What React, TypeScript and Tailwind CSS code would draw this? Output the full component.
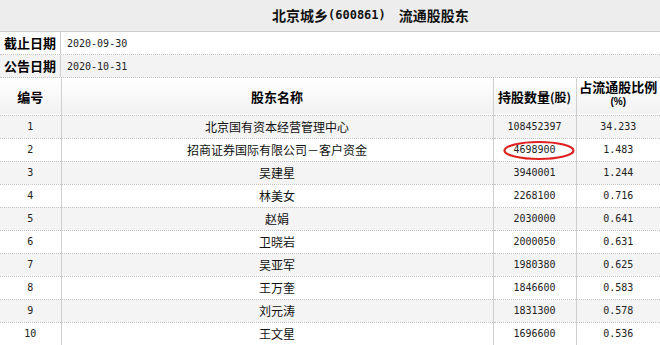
import React from 'react';

type Holder = { no: number; name: string; shares: string; ratio: string };

const holders: Holder[] = [
  { no: 1, name: '北京国有资本经营管理中心', shares: '108452397', ratio: '34.233' },
  { no: 2, name: '招商证券国际有限公司－客户资金', shares: '4698900', ratio: '1.483' },
  { no: 3, name: '吴建星', shares: '3940001', ratio: '1.244' },
  { no: 4, name: '林美女', shares: '2268100', ratio: '0.716' },
  { no: 5, name: '赵娟', shares: '2030000', ratio: '0.641' },
  { no: 6, name: '卫晓岩', shares: '2000050', ratio: '0.631' },
  { no: 7, name: '吴亚军', shares: '1980380', ratio: '0.625' },
  { no: 8, name: '王万奎', shares: '1846600', ratio: '0.583' },
  { no: 9, name: '刘元涛', shares: '1831300', ratio: '0.578' },
  { no: 10, name: '王文星', shares: '1696600', ratio: '0.536' },
];

const cjk = "font-['Noto_Sans_CJK_SC','Noto_Sans',sans-serif]";
const mono = "font-['DejaVu_Sans_Mono','Liberation_Mono',monospace]";

function DateRow({ label, value, shaded }: { label: string; value: string; shaded?: boolean }) {
  return (
    <div className={`flex h-[23px] border-b border-dotted border-[#c4c4c4] ${shaded ? 'bg-[#f3f3f3]' : 'bg-white'}`}>
      <div className={`w-[61px] shrink-0 border-r border-[#cfcfcf] flex items-center justify-center text-[13px] font-bold text-black ${cjk}`}>
        {label}
      </div>
      <div className={`flex items-center pl-[6px] text-[10px] text-[#222] ${mono}`}>{value}</div>
    </div>
  );
}

export default function App() {
  return (
    <div className={`w-[660px] h-[345px] overflow-hidden bg-white text-black ${cjk}`}>
      <div className="h-[32px] bg-[#ededed] border-b border-[#cdcdcd] flex items-center pl-[272px] pb-[1px]">
        <span className="text-[14px] font-bold text-[#111] leading-none">北京城乡</span>
        <span className={`text-[12px] font-bold text-[#111] leading-none ${mono}`}>(600861)</span>
        <span className="text-[14px] font-bold text-[#111] leading-none ml-[13px]">流通股股东</span>
      </div>

      <DateRow label="截止日期" value="2020-09-30" />
      <DateRow label="公告日期" value="2020-10-31" shaded />

      <table className="w-[660px] table-fixed border-collapse">
        <colgroup>
          <col className="w-[61px]" />
          <col className="w-[432px]" />
          <col className="w-[83px]" />
          <col className="w-[84px]" />
        </colgroup>
        <thead>
          <tr className="h-[37px] bg-gradient-to-b from-white to-[#f2f2f2] border-b border-dotted border-[#c4c4c4]">
            <th className="border-r border-[#cfcfcf] text-[13px] font-bold">编号</th>
            <th className="border-r border-[#cfcfcf] text-[13px] font-bold">股东名称</th>
            <th className="border-r border-[#cfcfcf] text-[13px] font-bold whitespace-nowrap">
              持股数量<span className="text-[12px]">(股)</span>
            </th>
            <th className="text-[13px] font-bold pb-[6px]">
              <div className="leading-[18px]">占流通股比例</div>
              <div className="text-[10px] leading-[12px] font-['Liberation_Sans',sans-serif]">(%)</div>
            </th>
          </tr>
        </thead>
        <tbody>
          {holders.map((h) => (
            <tr
              key={h.no}
              className={`h-[23px] border-b border-dotted border-[#c4c4c4] ${h.no % 2 === 1 ? 'bg-[#f4f4f4]' : 'bg-white'}`}
            >
              <td className={`border-r border-[#cfcfcf] text-center text-[10px] text-[#222] ${mono}`}>{h.no}</td>
              <td className="border-r border-[#cfcfcf] text-center text-[12px] text-[#111]">{h.name}</td>
              <td className={`relative border-r border-[#cfcfcf] text-center text-[10px] text-[#222] ${mono}`}>
                {h.shares}
                {h.no === 2 && (
                  // hand-drawn red circle around the highlighted figure
                  <svg
                    className="absolute left-[8px] top-[1px] pointer-events-none"
                    width="74"
                    height="21"
                    viewBox="0 0 74 21"
                  >
                    <ellipse cx="37" cy="10.5" rx="34.5" ry="8.5" fill="none" stroke="#e02020" strokeWidth="2.2" />
                  </svg>
                )}
              </td>
              <td className={`text-center text-[10px] text-[#222] ${mono}`}>{h.ratio}</td>
            </tr>
          ))}
        </tbody>
      </table>
    </div>
  );
}
